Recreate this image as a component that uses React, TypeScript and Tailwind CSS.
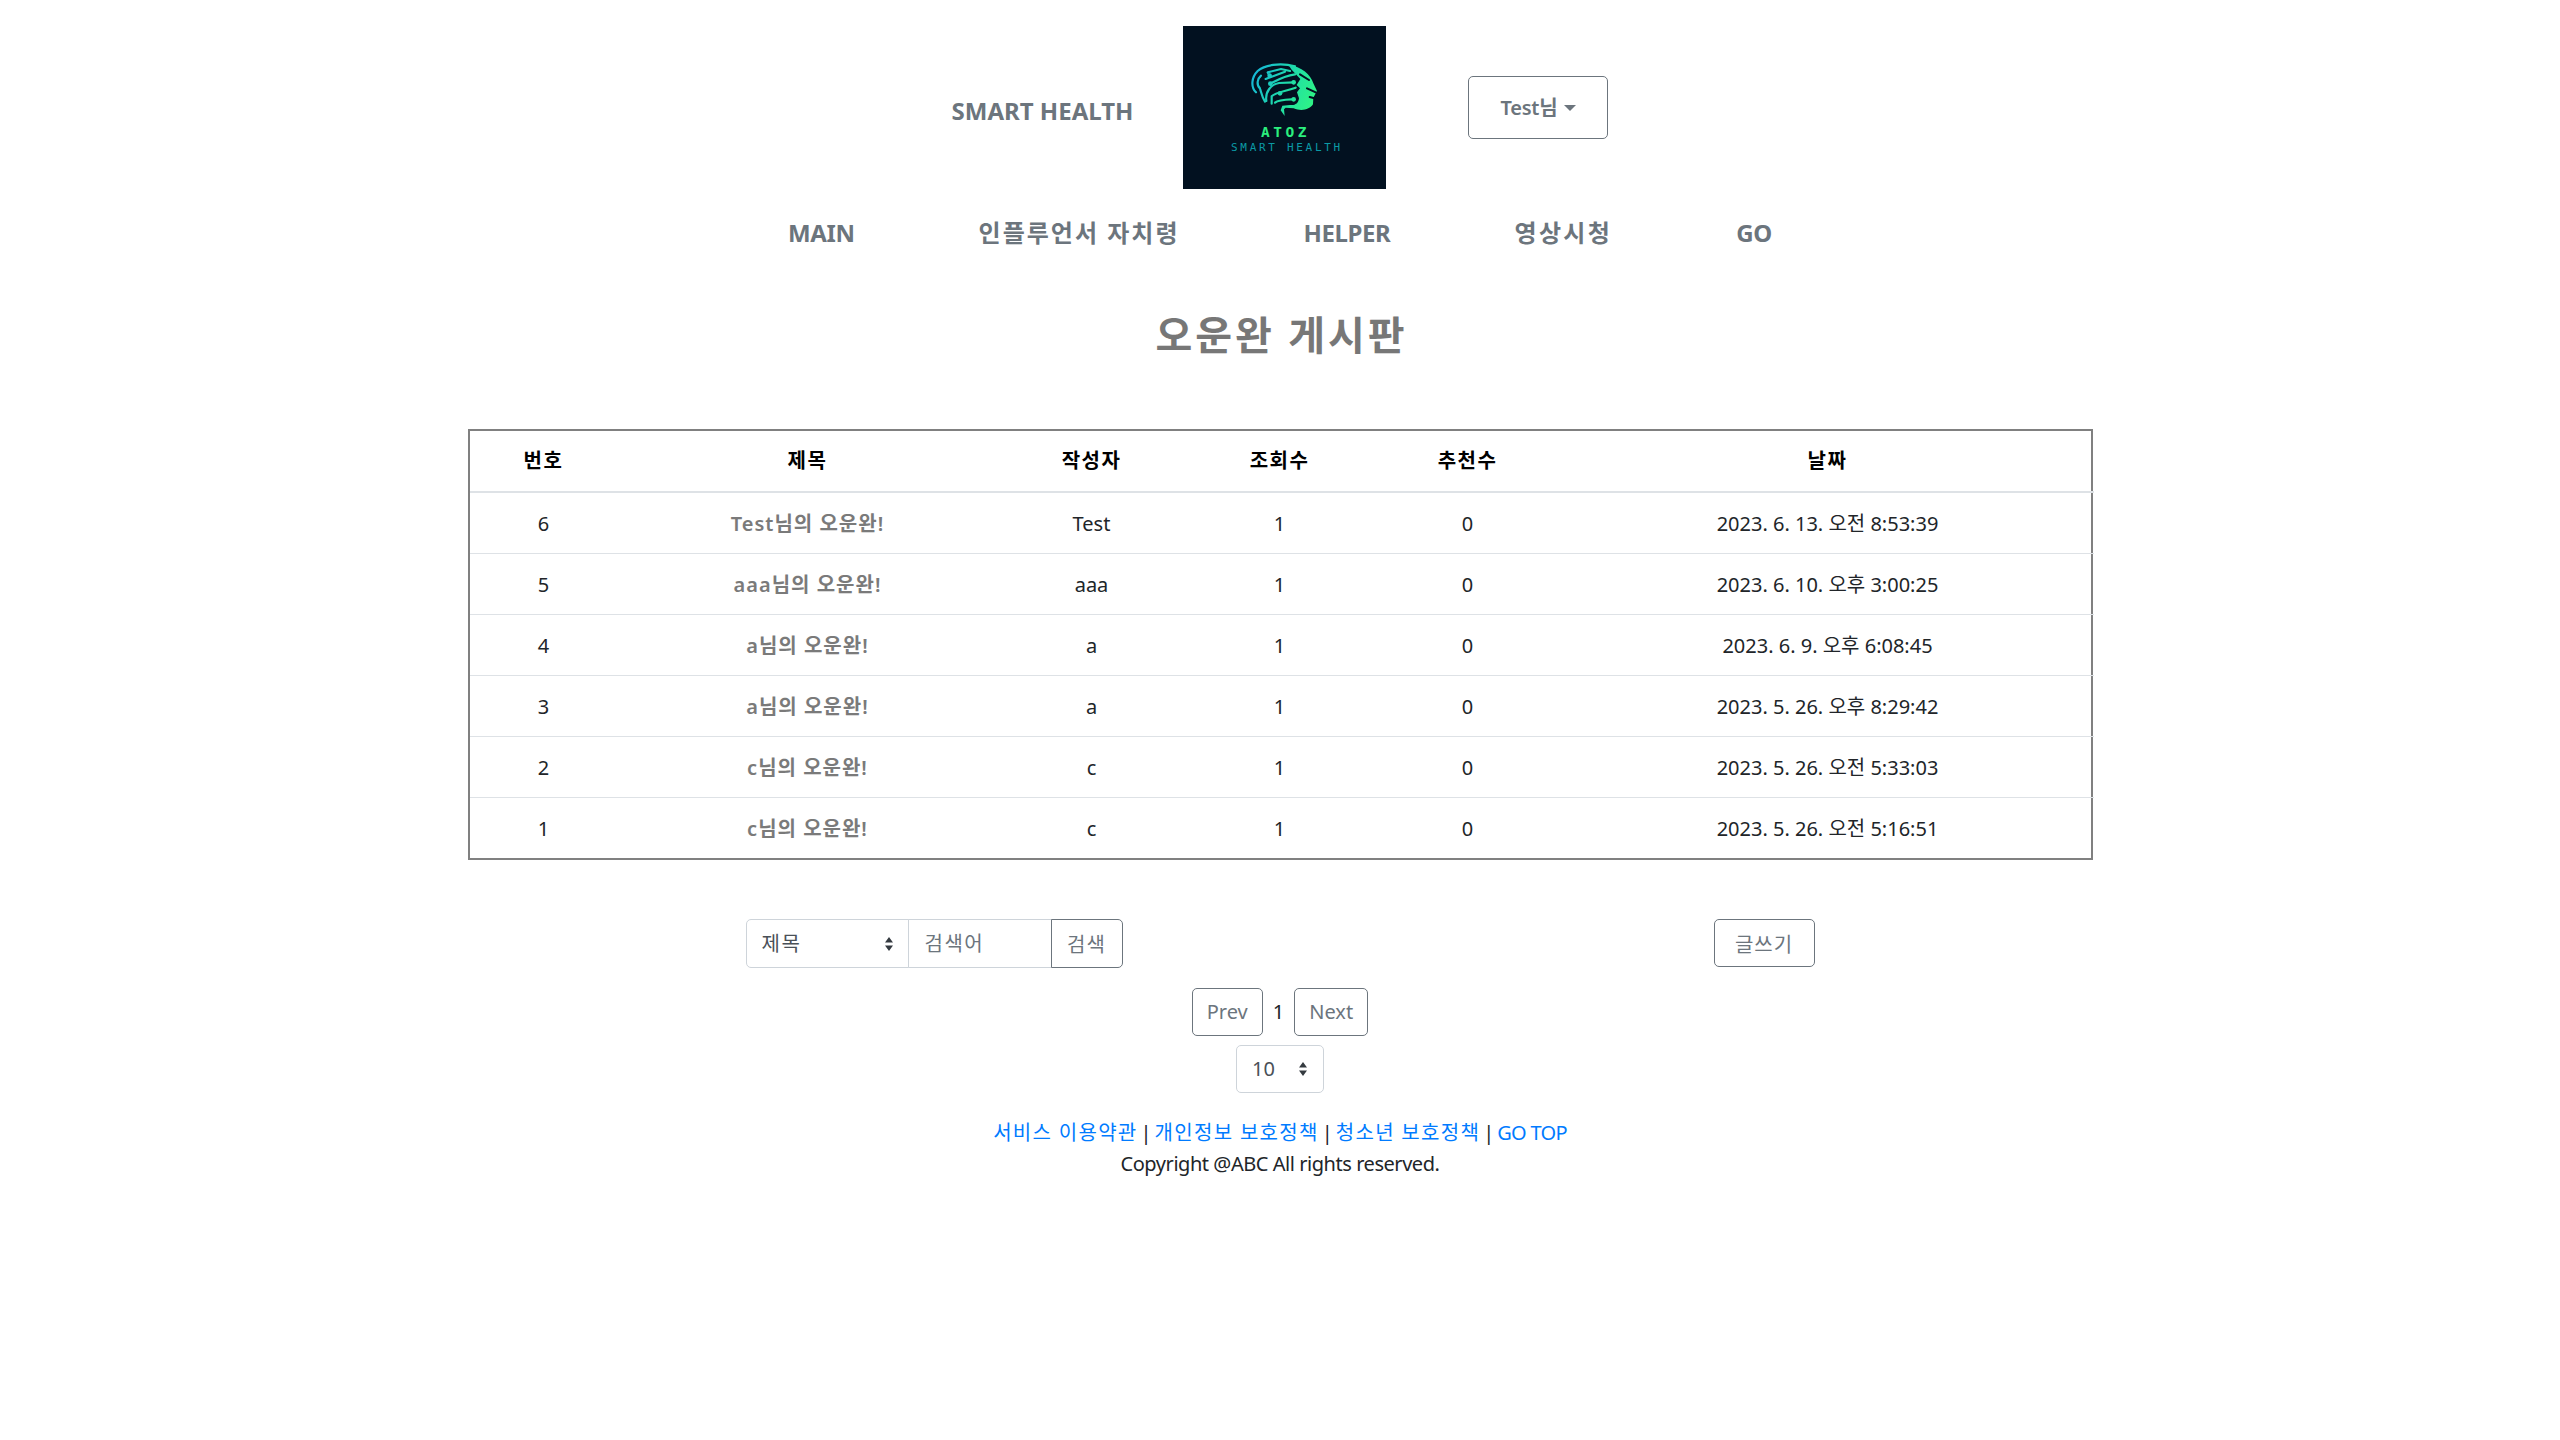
const font = 'font-["Noto_Sans","Noto_Sans_CJK_KR",sans-serif]'

const navItems = [
  { label: 'MAIN', className: '' },
  { label: '인플루언서 자치령', className: 'tracking-[2px]' },
  { label: 'HELPER', className: '' },
  { label: '영상시청', className: 'tracking-[2.4px]' },
  { label: 'GO', className: '' },
]

const columns = [
  { label: '번호', width: 'w-[148px]' },
  { label: '제목', width: 'w-[380px]' },
  { label: '작성자', width: 'w-[188px]' },
  { label: '조회수', width: 'w-[188px]' },
  { label: '추천수', width: 'w-[188px]' },
  { label: '날짜', width: 'w-[532px]' },
]

const posts = [
  { id: 6, title: 'Test님의 오운완!', author: 'Test', views: 1, likes: 0, date: '2023. 6. 13. 오전 8:53:39' },
  { id: 5, title: 'aaa님의 오운완!', author: 'aaa', views: 1, likes: 0, date: '2023. 6. 10. 오후 3:00:25' },
  { id: 4, title: 'a님의 오운완!', author: 'a', views: 1, likes: 0, date: '2023. 6. 9. 오후 6:08:45' },
  { id: 3, title: 'a님의 오운완!', author: 'a', views: 1, likes: 0, date: '2023. 5. 26. 오후 8:29:42' },
  { id: 2, title: 'c님의 오운완!', author: 'c', views: 1, likes: 0, date: '2023. 5. 26. 오전 5:33:03' },
  { id: 1, title: 'c님의 오운완!', author: 'c', views: 1, likes: 0, date: '2023. 5. 26. 오전 5:16:51' },
]

function Logo() {
  return (
    <svg viewBox="0 0 203 163" className="w-[203px] h-[163px] shrink-0 bg-[#021120]">
      <defs>
        <linearGradient id="brain" gradientUnits="userSpaceOnUse" x1="20" y1="40" x2="215" y2="130">
          <stop offset="0" stopColor="#14b4dc" />
          <stop offset="0.55" stopColor="#1fdca8" />
          <stop offset="1" stopColor="#2ff584" />
        </linearGradient>
      </defs>
      {/* brain is drawn at 3x, same scale as the zoomed crop */}
      <g transform="translate(62 29) scale(0.3333)">
        <path
          fill="url(#brain)"
          d="M130 29 C170 34 198 60 205 85 L216 108 L205 128 L204 148 C195 163 170 170 146 160 L122 158 L117 163 L119 183 L107 166 L112 152 L135 150 C150 152 160 146 162 130 L156 112 L165 100 L155 90 L166 72 L140 44 Z"
        />
        <g fill="none" stroke="#021120" strokeWidth="6" strokeLinecap="round">
          <path d="M165 58 L192 75" />
          <path d="M186 100 L214 113" />
          <path d="M194 126 L208 130" />
        </g>
        <g fill="none" stroke="url(#brain)" strokeWidth="6.5" strokeLinecap="round" strokeLinejoin="round">
          <path d="M33 112 C16 95 20 66 38 48 C58 30 105 22 150 34" />
          <path d="M45 100 C34 90 36 72 48 62" />
          <path d="M60 140 C52 128 50 118 46 104" />
          <path d="M74 62 L68 52 L108 42 L135 48" />
          <path d="M62 72 L120 50" />
          <path d="M76 86 C95 76 118 62 150 58" />
          <path d="M64 138 C60 110 78 88 102 84 L146 82" />
          <path d="M80 146 L80 124 C92 112 118 110 152 98" />
          <path d="M90 143 C100 134 120 134 146 133" />
        </g>
        <g fill="url(#brain)">
          <circle cx="74" cy="62" r="7" />
          <circle cx="76" cy="86" r="7" />
          <circle cx="146" cy="82" r="7" />
          <circle cx="105" cy="115" r="7" />
          <circle cx="146" cy="133" r="7" />
        </g>
      </g>
      <text
        x="78"
        y="111"
        fill="#2bef7e"
        fontFamily="'DejaVu Sans Mono', monospace"
        fontWeight="700"
        fontSize="14.5"
        letterSpacing="3.5"
      >
        ATOZ
      </text>
      <text x="48" y="125" fill="#0b9aa5" fontFamily="'DejaVu Sans Mono', monospace" fontSize="11" letterSpacing="2.7">
        SMART HEALTH
      </text>
    </svg>
  )
}

function SelectArrows({ className }: { className: string }) {
  return (
    <svg viewBox="0 0 8 14" className={`absolute top-1/2 -translate-y-1/2 w-[8px] h-[14px] pointer-events-none ${className}`}>
      <path d="M4 0 L8 5.5 H0 Z M4 14 L0 8.5 H8 Z" fill="#343a40" />
    </svg>
  )
}

function OutlineButton({ label, className }: { label: string; className: string }) {
  return (
    <button className={`border border-[#6c757d] rounded-[5px] text-[#6c757d] text-[20px] leading-[30px] bg-white ${className}`}>
      {label}
    </button>
  )
}

export default function App() {
  return (
    <div className={`min-h-[1440px] bg-white text-[20px] leading-[30px] text-[#212529] ${font}`}>
      <header className="pt-[26px] flex items-center justify-center">
        <span className="text-[24px] font-bold text-[#6c757d] mt-[6px]">SMART HEALTH</span>
        <div className="ml-[50px] mr-[82px]">
          <Logo />
        </div>
        <button className="w-[140px] h-[63px] border border-[#6c757d] rounded-[5px] flex items-center justify-center gap-[7px] text-[#6c757d] font-semibold bg-white tracking-[-0.2px]">
          Test님
          <span className="border-x-[6px] border-x-transparent border-t-[6px] border-t-[#6c757d]" />
        </button>
      </header>

      <nav className="mt-[26px] flex justify-center gap-[124px] text-[24px] leading-[36px] font-bold text-[#6c757d] tracking-[-0.4px]">
        {navItems.map((item) => (
          <a key={item.label} href="#" className={item.className}>
            {item.label}
          </a>
        ))}
      </nav>

      <h2 className="mt-[54px] pl-[3px] text-center text-[40px] leading-[60px] font-bold text-[#777777] tracking-[3px]">오운완 게시판</h2>

      <div className="mt-[64px] w-[1625px] mx-auto border-2 border-[#808080]">
        <table className="w-full table-fixed border-collapse text-center">
          <thead>
            <tr className="h-[61px] border-b-2 border-[#dee2e6]">
              {columns.map((col) => (
                <th key={col.label} className={`${col.width} font-semibold text-black tracking-[1.5px]`}>
                  {col.label}
                </th>
              ))}
            </tr>
          </thead>
          <tbody>
            {posts.map((post, i) => (
              <tr key={post.id} className={`h-[61px] [&>td]:pt-[2px] ${i < posts.length - 1 ? 'border-b border-[#dee2e6]' : ''}`}>
                <td>{post.id}</td>
                <td>
                  <a href="#" className="font-semibold text-[#7a7a7a] tracking-[1px]">
                    {post.title}
                  </a>
                </td>
                <td>{post.author}</td>
                <td>{post.views}</td>
                <td>{post.likes}</td>
                <td>{post.date}</td>
              </tr>
            ))}
          </tbody>
        </table>
      </div>

      <div className="mt-[59px] w-[1069px] mx-auto flex justify-between items-start">
        <div className="flex h-[49px]">
          <div className="relative w-[163px]">
            <select className="w-full h-full appearance-none border border-[#ced4da] rounded-l-[5px] pl-[15px] pt-[1px] text-[#495057] bg-white tracking-[1.5px]">
              <option>제목</option>
            </select>
            <SelectArrows className="right-[16px]" />
          </div>
          <input
            placeholder="검색어"
            className="w-[144px] -ml-px border border-[#ced4da] px-[16px] pt-[1px] outline-none placeholder:text-[#6c757d] tracking-[1.5px]"
          />
          <OutlineButton label="검색" className="w-[72px] h-[49px] -ml-px pt-[2px] rounded-l-none tracking-[1px]" />
        </div>
        <OutlineButton label="글쓰기" className="w-[101px] h-[48px] pt-[3px] tracking-[1px]" />
      </div>

      <div className="mt-[20px] flex justify-center items-center gap-[10px]">
        <OutlineButton label="Prev" className="w-[71px] h-[48px]" />
        <span>1</span>
        <OutlineButton label="Next" className="w-[74px] h-[48px]" />
      </div>

      <div className="mt-[9px] flex justify-center">
        <div className="relative w-[88px] h-[48px]">
          <select className="w-full h-full appearance-none border border-[#ced4da] rounded-[5px] pl-[15px] text-[#495057] bg-white">
            <option>10</option>
          </select>
          <SelectArrows className="right-[17px]" />
        </div>
      </div>

      <footer className="mt-[24px] text-center leading-[31px]">
        <p>
          <a href="#" className="text-[#007bff] tracking-[1.3px]">서비스 이용약관</a>
          <span className="mx-[3px]">|</span>
          <a href="#" className="text-[#007bff] tracking-[1.3px]">개인정보 보호정책</a>
          <span className="mx-[3px]">|</span>
          <a href="#" className="text-[#007bff] tracking-[1.3px]">청소년 보호정책</a>
          <span className="mx-[3px]">|</span>
          <a href="#" className="text-[#007bff] tracking-[-0.7px]">GO TOP</a>
        </p>
        <p className="tracking-[-0.45px]">Copyright @ABC All rights reserved.</p>
      </footer>
    </div>
  )
}
